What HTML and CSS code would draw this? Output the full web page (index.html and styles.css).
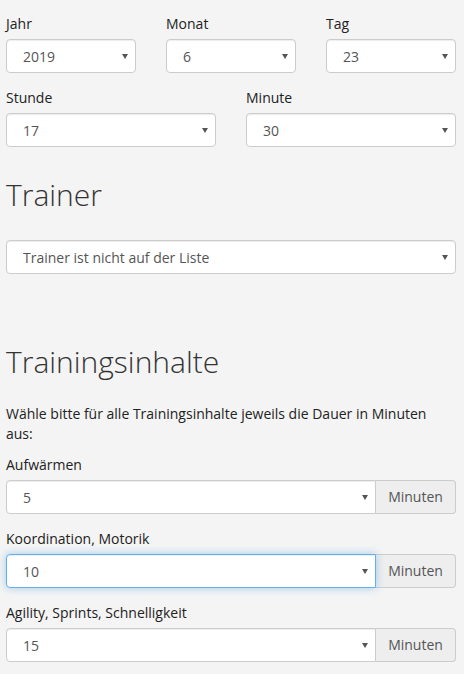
FILE: index.html
```html
<!DOCTYPE html>
<html lang="de">
<head>
    <meta charset="UTF-8">
    <meta name="viewport" content="width=device-width, initial-scale=1.0">
    <title>Training erfassen</title>
    <link rel="stylesheet" href="styles.css">
</head>
<body>
    <form class="training-form">
        <div class="form-row form-row-3">
            <div class="form-group">
                <label class="form-label">Jahr</label>
                <span class="select-wrap">
                    <select class="form-select">
                        <option>2018</option>
                        <option selected>2019</option>
                        <option>2020</option>
                    </select>
                </span>
            </div>
            <div class="form-group">
                <label class="form-label">Monat</label>
                <span class="select-wrap">
                    <select class="form-select">
                        <option>5</option>
                        <option selected>6</option>
                        <option>7</option>
                    </select>
                </span>
            </div>
            <div class="form-group">
                <label class="form-label">Tag</label>
                <span class="select-wrap">
                    <select class="form-select">
                        <option>22</option>
                        <option selected>23</option>
                        <option>24</option>
                    </select>
                </span>
            </div>
        </div>
        <div class="form-row form-row-2">
            <div class="form-group">
                <label class="form-label">Stunde</label>
                <span class="select-wrap">
                    <select class="form-select">
                        <option>16</option>
                        <option selected>17</option>
                        <option>18</option>
                    </select>
                </span>
            </div>
            <div class="form-group">
                <label class="form-label">Minute</label>
                <span class="select-wrap">
                    <select class="form-select">
                        <option>0</option>
                        <option>15</option>
                        <option selected>30</option>
                        <option>45</option>
                    </select>
                </span>
            </div>
        </div>

        <h2 class="section-title trainer-title">Trainer</h2>
        <div class="form-group">
            <span class="select-wrap">
                <select class="form-select">
                    <option selected>Trainer ist nicht auf der Liste</option>
                </select>
            </span>
        </div>

        <h2 class="section-title content-title">Trainingsinhalte</h2>
        <p class="hint">Wähle bitte für alle Trainingsinhalte jeweils die Dauer in Minuten aus:</p>

        <div class="form-group">
            <label class="form-label">Aufwärmen</label>
            <div class="input-group">
                <span class="select-wrap">
                    <select class="form-select">
                        <option>0</option>
                        <option selected>5</option>
                        <option>10</option>
                    </select>
                </span>
                <span class="input-addon">Minuten</span>
            </div>
        </div>
        <div class="form-group">
            <label class="form-label">Koordination, Motorik</label>
            <div class="input-group">
                <span class="select-wrap">
                    <select class="form-select is-focused">
                        <option>5</option>
                        <option selected>10</option>
                        <option>15</option>
                    </select>
                </span>
                <span class="input-addon">Minuten</span>
            </div>
        </div>
        <div class="form-group">
            <label class="form-label">Agility, Sprints, Schnelligkeit</label>
            <div class="input-group">
                <span class="select-wrap">
                    <select class="form-select">
                        <option>10</option>
                        <option selected>15</option>
                        <option>20</option>
                    </select>
                </span>
                <span class="input-addon">Minuten</span>
            </div>
        </div>
    </form>
</body>
</html>
```

FILE: styles.css
```css
body {
    margin: 0;
    background-color: #f4f4f4;
    color: #333;
    font-family: "Open Sans", sans-serif;
    font-size: 14px;
    line-height: 20px;
}

.training-form {
    padding: 14px 8px 0 6px;
}

.form-row {
    display: grid;
    column-gap: 30px;
}
.form-row-3 {
    grid-template-columns: repeat(3, 1fr);
}
.form-row-2 {
    grid-template-columns: repeat(2, 1fr);
}

.form-group {
    margin-bottom: 15px;
}
.form-label {
    display: block;
    margin-bottom: 5px;
    color: #222;
    font-weight: 500;
}

.select-wrap {
    position: relative;
    display: block;
    flex: 1;
}
.select-wrap::after {
    content: "";
    position: absolute;
    top: 15px;
    right: 8px;
    border-left: 3px solid transparent;
    border-right: 3px solid transparent;
    border-top: 5px solid #555;
    pointer-events: none;
}
.form-select {
    display: block;
    width: 100%;
    height: 34px;
    padding: 6px 24px 6px 16px;
    background-color: #fff;
    color: #555;
    border: 1px solid #ccc;
    border-radius: 4px;
    box-sizing: border-box;
    box-shadow: inset 0 1px 1px rgba(0, 0, 0, 0.075);
    font-family: inherit;
    font-size: 14px;
    appearance: none;
    outline: none;
}
.form-select.is-focused {
    border-color: #66afe9;
    box-shadow: inset 0 1px 1px rgba(0, 0, 0, 0.075), 0 0 8px rgba(102, 175, 233, 0.6);
}

.section-title {
    font-family: "Open Sans", sans-serif;
    font-weight: 300;
    font-size: 30px;
    line-height: 33px;
    color: #333;
}
.trainer-title {
    margin: 16px 0 29px;
}
.content-title {
    margin: 71px 0 26px;
}

.hint {
    margin: 0 0 11px;
    color: #222;
}

.input-group {
    display: flex;
}
.input-group .form-select {
    border-radius: 4px 0 0 4px;
}
.input-addon {
    width: 80px;
    height: 34px;
    background-color: #eee;
    color: #555;
    border: 1px solid #ccc;
    border-left: 0;
    border-radius: 0 4px 4px 0;
    box-sizing: border-box;
    line-height: 32px;
    text-align: center;
}
```
